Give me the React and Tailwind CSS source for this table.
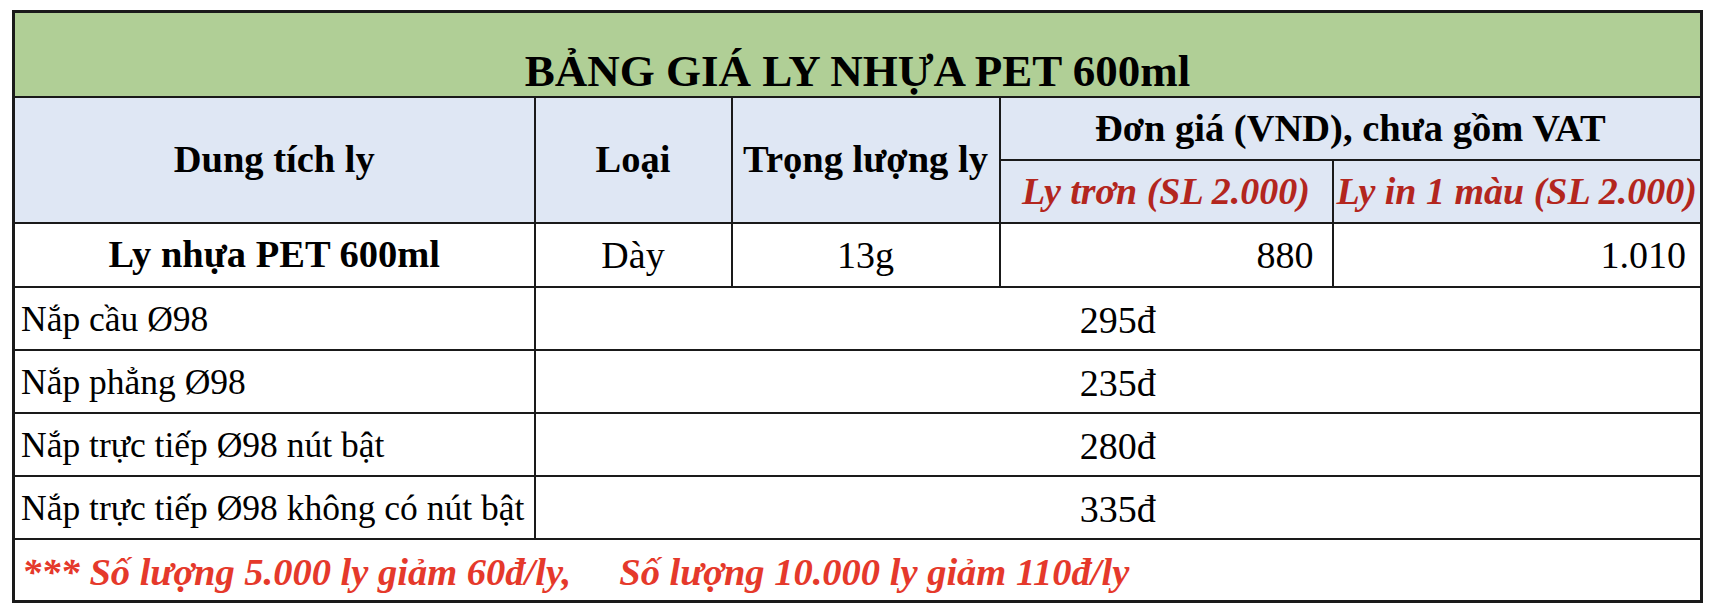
const lids = [
  { name: "Nắp cầu Ø98", price: "295đ" },
  { name: "Nắp phẳng Ø98", price: "235đ" },
  { name: "Nắp trực tiếp Ø98 nút bật", price: "280đ" },
  { name: "Nắp trực tiếp Ø98 không có nút bật", price: "335đ" },
];

export default function App() {
  return (
    <div className="min-h-[612px] bg-white pl-[12px] pt-[10px] font-['Liberation_Serif','Times_New_Roman',serif] text-black">
      <table className="w-[1688px] table-fixed border-collapse border-[3px] border-[#1a1a1a]">
        <colgroup>
          <col className="w-[521px]" />
          <col className="w-[197px]" />
          <col className="w-[268px]" />
          <col className="w-[333px]" />
          <col className="w-[369px]" />
        </colgroup>
        <tbody>
          {/* Title */}
          <tr className="h-[85px] bg-[#b0cf96]">
            <td colSpan={5} className="border-2 border-[#1a1a1a] pb-[2px] text-center align-bottom text-[45px] font-bold leading-none">
              BẢNG GIÁ LY NHỰA PET 600ml
            </td>
          </tr>

          {/* Header */}
          <tr className="h-[63px] bg-[#dfe7f4]">
            <td rowSpan={2} className="border-2 border-[#1a1a1a] text-center align-middle text-[38.5px] font-bold leading-none">
              Dung tích ly
            </td>
            <td rowSpan={2} className="border-2 border-[#1a1a1a] text-center align-middle text-[38.5px] font-bold leading-none">
              Loại
            </td>
            <td rowSpan={2} className="whitespace-nowrap border-2 border-[#1a1a1a] text-center align-middle text-[38.5px] font-bold leading-none">
              Trọng lượng ly
            </td>
            <td colSpan={2} className="border-2 border-[#1a1a1a] text-center align-middle text-[38.5px] font-bold leading-none">
              Đơn giá (VND), chưa gồm VAT
            </td>
          </tr>
          <tr className="h-[63px] bg-[#dfe7f4]">
            <td className="whitespace-nowrap border-2 border-[#1a1a1a] text-center align-middle text-[38px] font-bold italic leading-none text-[#b3261e]">
              Ly trơn (SL 2.000)
            </td>
            <td className="whitespace-nowrap border-2 border-[#1a1a1a] px-0 text-center align-middle text-[38px] font-bold italic leading-none text-[#b3261e]">
              Ly in 1 màu (SL 2.000)
            </td>
          </tr>

          {/* Cup row */}
          <tr className="h-[64px]">
            <td className="border-2 border-[#1a1a1a] text-center align-middle text-[38.5px] font-bold leading-none">
              Ly nhựa PET 600ml
            </td>
            <td className="border-2 border-[#1a1a1a] text-center align-middle text-[38px] leading-none">Dày</td>
            <td className="border-2 border-[#1a1a1a] text-center align-middle text-[38px] leading-none">13g</td>
            <td className="border-2 border-[#1a1a1a] pr-[18px] text-right align-middle text-[38px] leading-none">880</td>
            <td className="border-2 border-[#1a1a1a] pr-[14px] text-right align-middle text-[38px] leading-none">1.010</td>
          </tr>

          {/* Lids */}
          {lids.map((l) => (
            <tr key={l.name} className="h-[63px]">
              <td className="whitespace-nowrap border-2 border-[#1a1a1a] pl-[6px] pt-[4px] text-left align-middle text-[35.5px] leading-none">
                {l.name}
              </td>
              <td colSpan={4} className="border-2 border-[#1a1a1a] pt-[4px] text-center align-middle text-[38px] leading-none">
                {l.price}
              </td>
            </tr>
          ))}

          {/* Footer note */}
          <tr className="h-[63px]">
            <td colSpan={5} className="whitespace-nowrap border-2 border-[#1a1a1a] pl-[7px] pt-[4px] text-left align-middle text-[38.5px] font-bold italic leading-none text-[#e5392b]">
              <span>*** Số lượng 5.000 ly giảm 60đ/ly,</span>
              <span className="ml-[48px]">Số lượng 10.000 ly giảm 110đ/ly</span>
            </td>
          </tr>
        </tbody>
      </table>
    </div>
  );
}
